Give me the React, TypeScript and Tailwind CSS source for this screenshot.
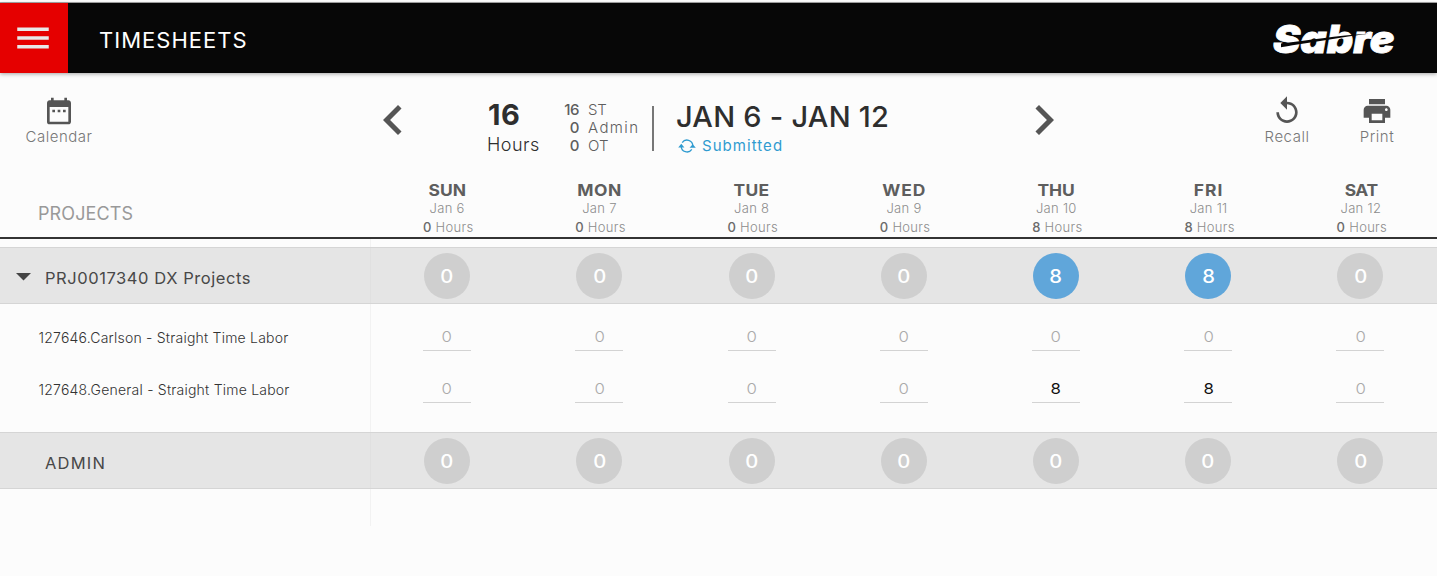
import type { ReactNode } from "react";
import {
  MdChevronLeft,
  MdChevronRight,
  MdDateRange,
  MdMenu,
  MdPrint,
  MdReplay,
} from "react-icons/md";

const days = [
  { name: "SUN", date: "Jan 6", hours: 0, tracking: "tracking-[0.1px]" },
  { name: "MON", date: "Jan 7", hours: 0, tracking: "tracking-[0.5px] -mr-[0.5px]" },
  { name: "TUE", date: "Jan 8", hours: 0, tracking: "tracking-[0.3px] -mr-[0.3px]" },
  { name: "WED", date: "Jan 9", hours: 0, tracking: "tracking-[0.9px] -mr-[0.9px]" },
  { name: "THU", date: "Jan 10", hours: 8, tracking: "tracking-[0px]" },
  { name: "FRI", date: "Jan 11", hours: 8, tracking: "tracking-[0.9px] -mr-[0.9px]" },
  { name: "SAT", date: "Jan 12", hours: 0, tracking: "tracking-[-0.4px]" },
];

const projectTotals = [0, 0, 0, 0, 8, 8, 0];
const adminTotals = [0, 0, 0, 0, 0, 0, 0];

const tasks = [
  { label: "127646.Carlson - Straight Time Labor", hours: [0, 0, 0, 0, 0, 0, 0] },
  { label: "127648.General - Straight Time Labor", hours: [0, 0, 0, 0, 8, 8, 0] },
];

function SabreLogo() {
  return (
    <svg width="132" height="56" viewBox="0 -10 132 56" className="block">
      <text
        x="3"
        y="32"
        fill="#fff"
        stroke="#fff"
        strokeWidth="0.8"
        fontFamily="Inter, sans-serif"
        fontWeight="900"
        fontStyle="italic"
        fontSize="39"
        textLength="121.5"
        lengthAdjust="spacingAndGlyphs"
      >
        Sabre
      </text>
      <path d="M11 22.6C38 19.6 66 14.6 99 12.8C72 16.2 42 21.5 11 26.2Z" fill="#070707" />
    </svg>
  );
}

function SyncIcon() {
  return (
    <svg width="18" height="14" viewBox="0 0 18 14" fill="none" className="block">
      <path d="M4.2 3.6A5.8 5.8 0 0 1 14.8 6.8" stroke="#2f9bd0" strokeWidth="1.3" />
      <path d="M13.8 10.4A5.8 5.8 0 0 1 3.2 7.2" stroke="#2f9bd0" strokeWidth="1.3" />
      <path d="M0.2 8.4L3.3 4.8L6.4 8.4Z" fill="#2f9bd0" />
      <path d="M11.6 8.8L14.7 5.2L17.8 8.8Z" fill="#2f9bd0" />
    </svg>
  );
}

function Action({ icon, label, width }: { icon: ReactNode; label: string; width: string }) {
  return (
    <button className={`mt-[22px] flex flex-col items-center text-[#555] ${width}`}>
      {icon}
      <span className="text-[15px] leading-5 font-light tracking-[0.5px] text-[#777]">{label}</span>
    </button>
  );
}

function Stat({ value, label, tracking }: { value: number; label: string; tracking: string }) {
  return (
    <div className="flex h-[18px] gap-[9px] text-[15px] leading-[18px] text-[#5e5e5e]">
      <span className="w-[19px] text-right font-medium tracking-[-0.5px]">{value}</span>
      <span className={`font-light ${tracking}`}>{label}</span>
    </div>
  );
}

function GroupRow({ label, totals, open }: { label: string; totals: number[]; open?: boolean }) {
  return (
    <div className="flex h-[57px] border-y border-[#d5d5d5] bg-[#e5e5e5]">
      <div className="flex w-[371px] shrink-0 items-center border-r border-[#e0e0e0] pt-[5px]">
        <div className="w-[45px] pl-[16px]">
          {open && (
            <svg width="15" height="8" viewBox="0 0 15 8" className="-mt-[2px] block">
              <path d="M0 0H15L7.5 7.5Z" fill="#444" />
            </svg>
          )}
        </div>
        <span
          className={`text-[16.5px] leading-5 text-[#484848] ${open ? "tracking-[0.56px]" : "tracking-[1.2px]"}`}
        >
          {label}
        </span>
      </div>
      <div className="grid flex-1 grid-cols-7 items-center justify-items-center pr-[0.4px]">
        {totals.map((t, i) => (
          <div
            key={i}
            className={`flex h-[46px] w-[46px] items-center justify-center rounded-full pt-[2px] text-[18px] font-medium text-white ${
              t > 0 ? "bg-[#60a6da]" : "bg-[#cfcfcf]"
            }`}
          >
            <span className="scale-x-[1.12]">{t}</span>
          </div>
        ))}
      </div>
    </div>
  );
}

export default function App() {
  return (
    <div className="h-[576px] w-[1437px] overflow-hidden bg-[#fcfcfc] font-['Inter',sans-serif]">
      <div className="h-[3px] border-b border-[#aaa] bg-white" />
      <header className="flex h-[70px] items-center bg-[#070707] shadow-[0_1px_4px_rgba(0,0,0,0.35)]">
        <button className="flex h-full w-[68px] items-center bg-[#e50000] pl-3">
          <MdMenu size={42} color="#e8e8e8" />
        </button>
        <h1 className="mt-1 ml-[31px] text-[22px] leading-7 tracking-[1.02px] text-white">TIMESHEETS</h1>
        <div className="mt-[2px] mr-[35px] ml-auto">
          <SabreLogo />
        </div>
      </header>

      <section className="flex h-[107px] items-start">
        <Action width="w-[118px]" icon={<MdDateRange size={32} />} label="Calendar" />
        <button className="mt-[17px] ml-[245px]">
          <MdChevronLeft size={60} color="#555" />
        </button>
        <div className="mt-[27px] ml-[64px] w-[73px]">
          <div className="pl-px text-[29px] leading-[30px] font-bold tracking-[0.5px] text-[#2e2e2e]">16</div>
          <div className="mt-[3px] text-[18px] leading-6 font-light tracking-[0.48px] text-[#2e2e2e]">Hours</div>
        </div>
        <div className="mt-[28px] w-[92px]">
          <Stat value={16} label="ST" tracking="tracking-[-0.3px]" />
          <Stat value={0} label="Admin" tracking="tracking-[1.4px]" />
          <Stat value={0} label="OT" tracking="tracking-[0.1px]" />
        </div>
        <div className="mt-[33px] h-[45px] w-[2px] bg-[#777]" />
        <div className="mt-[29px] ml-[22px] w-[338px]">
          <div className="text-[29px] leading-[30px] font-medium tracking-[0.25px] text-[#2e2e2e]">
            JAN 6 - JAN 12
          </div>
          <div className="mt-[4px] flex items-center pl-[2px] text-[#2f9bd0]">
            <SyncIcon />
            <span className="ml-[6px] text-[15px] leading-5 tracking-[1.05px]">Submitted</span>
          </div>
        </div>
        <button className="mt-[17px]">
          <MdChevronRight size={60} color="#555" />
        </button>
        <div className="mr-[15px] ml-auto flex">
          <Action width="w-[90px]" icon={<MdReplay size={32} />} label="Recall" />
          <Action width="w-[90px]" icon={<MdPrint size={32} />} label="Print" />
        </div>
      </section>

      <div className="flex h-[59px] border-b-2 border-[#333]">
        <div className="w-[371px] shrink-0 pt-[24px] pl-[38px] text-[18px] leading-5 tracking-[0.12px] text-[#999]">
          PROJECTS
        </div>
        <div className="grid flex-1 grid-cols-7">
          {days.map((d) => (
            <div key={d.name} className="flex flex-col items-center text-[#8c8c8c]">
              <div className={`scale-x-[1.09] text-[16px] leading-5 font-bold text-[#5e5e5e] ${d.tracking}`}>
                {d.name}
              </div>
              <div className="-mt-px text-[13px] leading-[18px] font-light tracking-[0.3px]">{d.date}</div>
              <div className="mt-px pl-[2px] text-[13px] leading-[18px] font-light tracking-[0.3px]">
                <span className="font-medium text-[#6a6a6a]">{d.hours}</span> Hours
              </div>
            </div>
          ))}
        </div>
      </div>

      <div className="h-2 w-[371px] border-r border-[#f2f2f2]" />
      <GroupRow label="PRJ0017340 DX Projects" totals={projectTotals} open />

      <div className="flex h-[128px]">
        <div className="w-[371px] shrink-0 border-r border-[#f2f2f2] pt-[7px] pl-[38.5px]">
          {tasks.map((t) => (
            <div
              key={t.label}
              className="flex h-[52px] items-center text-[14px] font-light tracking-[0.22px] text-[#333]"
            >
              {t.label}
            </div>
          ))}
        </div>
        <div className="flex-1 pt-[7px] pr-[0.4px]">
          {tasks.map((t) => (
            <div key={t.label} className="grid h-[52px] grid-cols-7 items-start justify-items-center">
              {t.hours.map((h, i) => (
                <div
                  key={i}
                  className={`flex h-[40px] w-[48px] items-center justify-center border-b border-[#d3d3d3] pt-[13px] text-[15px] ${
                    h > 0 ? "text-[#111]" : "font-light text-[#aaa]"
                  }`}
                >
                  <span className="scale-x-[1.12]">{h}</span>
                </div>
              ))}
            </div>
          ))}
        </div>
      </div>

      <GroupRow label="ADMIN" totals={adminTotals} />
      <div className="h-[37px] w-[371px] border-r border-[#f2f2f2]" />
    </div>
  );
}
